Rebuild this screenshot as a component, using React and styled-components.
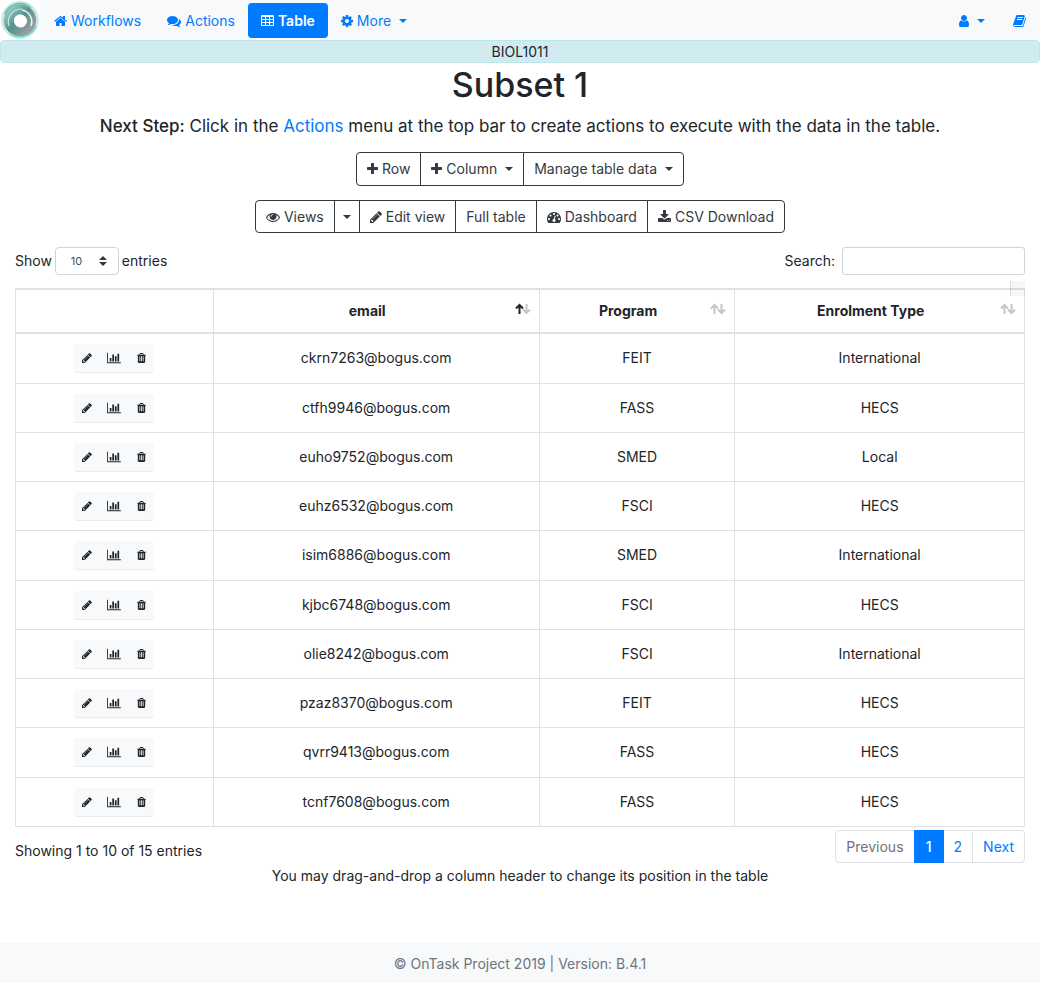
import React from 'react';
import styled, { createGlobalStyle, css } from 'styled-components';

const Global = createGlobalStyle`
  *, *::before, *::after { box-sizing: border-box; }
  body {
    margin: 0;
    background: #fff;
    color: #212529;
    font-family: Inter, "Liberation Sans", sans-serif;
    font-size: 14px;
    line-height: 22px;
  }
  button, input, select { font: inherit; color: inherit; }
  a { color: #007bff; text-decoration: none; }
`;

const cell = 'v-192q0-14-9-23t-23-9h-320q-14 0-23 9t-9 23v192q0 14 9 23t23 9h320q14 0 23-9t9-23z';
const slat = 'v-704q0-14-9-23t-23-9h-64q-14 0-23 9t-9 23v704q0 14 9 23t23 9h64q14 0 23-9t9-23z';
const dot = 'q0-53-37.5-90.5t-90.5-37.5-90.5 37.5-37.5 90.5 37.5 90.5 90.5 37.5 90.5-37.5 37.5-90.5z';

// Each icon: [left edge, width, path] on a 1792 unit em.
const ICONS = {
  home: [64, 1664, 'M1472 992v480q0 26-19 45t-45 19h-384v-384h-256v384h-384q-26 0-45-19t-19-45v-480q0-1 .5-3t.5-3l575-474 575 474q1 2 1 6zm223-69l-62 74q-8 9-21 11h-3q-13 0-21-7l-692-577-692 577q-12 8-24 7-13-2-21-11l-62-74q-8-10-7-23.5t11-21.5l719-599q32-26 76-26t76 26l244 204v-195q0-14 9-23t23-9h192q14 0 23 9t9 23v408l219 182q10 8 11 21.5t-7 23.5z'],
  comments: [0, 1792, 'M1408 768q0 139-94 257t-256.5 186.5-353.5 68.5q-86 0-176-16-124 88-278 128-36 9-86 16h-3q-11 0-20.5-8t-11.5-21q-1-3-1-6.5t.5-6.5 2-6l2.5-5 3.5-5.5 4-5 4.5-5 4-4.5q5-6 23-25t26-29.5 22.5-29 25-38.5 20.5-44q-124-72-195-177t-71-224q0-139 94-257t256.5-186.5 353.5-68.5 353.5 68.5 256.5 186.5 94 257zm384 256q0 120-71 224.5t-195 176.5q10 24 20.5 44t25 38.5 22.5 29 26 29.5 23 25q1 1 4 4.5t4.5 5 4 5 3.5 5.5l2.5 5 2 6 .5 6.5-1 6.5q-3 14-13 22t-22 7q-50-7-86-16-154-40-278-128-90 16-176 16-271 0-472-132 58 4 88 4 161 0 309-45t264-129q125-92 192-212t67-254q0-77-23-152 129 71 204 178t75 230z'],
  table: [64, 1664, `M576 1376${cell}M576 992${cell}M1088 1376${cell}M576 608${cell}M1088 992${cell}M1600 1376${cell}M1088 608${cell}M1600 992${cell}M1600 608${cell}M1728 288v1088q0 66-47 113t-113 47h-1344q-66 0-113-47t-47-113v-1088q0-66 47-113t113-47h1344q66 0 113 47t47 113z`],
  cog: [128, 1536, 'M1152 896q0-106-75-181t-181-75-181 75-75 181 75 181 181 75 181-75 75-181zm512-109v222q0 12-8 23t-20 13l-185 28q-19 54-39 91 35 50 107 138 10 12 10 25t-9 23q-27 37-99 108t-94 71q-12 0-26-9l-138-108q-44 23-91 38-16 136-29 186-7 28-36 28h-222q-14 0-24.5-8.5t-11.5-21.5l-28-184q-49-16-90-37l-141 107q-10 9-25 9-14 0-25-11-126-114-165-168-7-10-7-23 0-12 8-23 15-21 51-66.5t54-70.5q-27-50-41-99l-183-27q-13-2-21-12.5t-8-23.5v-222q0-12 8-23t19-13l186-28q14-46 39-92-40-57-107-138-10-12-10-24 0-10 9-23 26-36 98.5-107.5t94.5-71.5q13 0 26 10l138 107q44-23 91-38 16-136 29-186 7-28 36-28h222q14 0 24.5 8.5t11.5 21.5l28 184q49 16 90 37l142-107q9-9 24-9 13 0 25 10 129 119 165 170 7 8 7 22 0 12-8 23-15 21-51 66.5t-54 70.5q26 50 41 98l183 28q13 2 21 12.5t8 23.5z'],
  user: [256, 1280, 'M1536 1399q0 109-62.5 187t-150.5 78h-854q-88 0-150.5-78t-62.5-187q0-85 8.5-160.5t31.5-152 58.5-131 94-89 134.5-34.5q131 128 313 128t313-128q76 0 134.5 34.5t94 89 58.5 131 31.5 152 8.5 160.5zm-256-887q0 159-112.5 271.5t-271.5 112.5-271.5-112.5-112.5-271.5 112.5-271.5 271.5-112.5 271.5 112.5 112.5 271.5z'],
  book: [64, 1664, 'M1703 478q40 57 18 129l-275 906q-19 64-76.5 107.5t-122.5 43.5h-923q-77 0-148.5-53.5t-99.5-131.5q-24-67-2-127 0-4 3-27t4-37q1-8-3-21.5t-3-19.5q2-11 8-21t16.5-23.5 16.5-23.5q23-38 45-91.5t30-91.5q3-10 .5-30t-.5-28q3-11 17-28t17-23q21-36 42-92t25-90q1-9-2.5-32t.5-28q4-13 22-30.5t22-22.5q19-26 42.5-84.5t27.5-96.5q1-8-3-25.5t-2-26.5q2-8 9-18t18-23 17-21q8-12 16.5-30.5t15-35 16-36 19.5-32 26.5-23.5 36-11.5 47.5 5.5l-1 3q38-9 51-9h761q74 0 114 56t18 130l-274 906q-36 119-71.5 153.5t-128.5 34.5h-869q-27 0-38 15-11 16-1 43 24 70 144 70h923q29 0 56-15.5t35-41.5l300-987q7-22 5-57 38 15 59 43zm-1064 2q-4 13 2 22.5t20 9.5h608q13 0 25.5-9.5t16.5-22.5l21-64q4-13-2-22.5t-20-9.5h-608q-13 0-25.5 9.5t-16.5 22.5zm-83 256q-4 13 2 22.5t20 9.5h608q13 0 25.5-9.5t16.5-22.5l21-64q4-13-2-22.5t-20-9.5h-608q-13 0-25.5 9.5t-16.5 22.5z'],
  plus: [192, 1408, 'M1600 736v192q0 40-28 68t-68 28h-416v416q0 40-28 68t-68 28h-192q-40 0-68-28t-28-68v-416h-416q-40 0-68-28t-28-68v-192q0-40 28-68t68-28h416v-416q0-40 28-68t68-28h192q40 0 68 28t28 68v416h416q40 0 68 28t28 68z'],
  eye: [0, 1792, 'M1664 960q-152-236-381-353 61 104 61 225 0 185-131.5 316.5t-316.5 131.5-316.5-131.5-131.5-316.5q0-121 61-225-229 117-381 353 133 205 333.5 326.5t434.5 121.5 434.5-121.5 333.5-326.5zm-720-384q0-20-14-34t-34-14q-125 0-214.5 89.5t-89.5 214.5q0 20 14 34t34 14 34-14 14-34q0-86 61-147t147-61q20 0 34-14t14-34zm848 384q0 34-20 69-140 230-376.5 368.5t-499.5 138.5-499.5-139-376.5-368q-20-35-20-69t20-69q140-229 376.5-368t499.5-139 499.5 139 376.5 368q20 35 20 69z'],
  pencil: [128, 1536, 'M491 1536l91-91-235-235-91 91v107h128v128h107zm523-928q0-22-22-22-10 0-17 7l-542 542q-7 7-7 17 0 22 22 22 10 0 17-7l542-542q7-7 7-17zm-54-192l416 416-832 832h-416v-416zm683 96q0 53-37 90l-166 166-416-416 166-165q36-38 90-38 53 0 91 38l235 234q37 39 37 91z'],
  dashboard: [0, 1792, `M384 1152${dot}M576 704${dot}M1004 1185l101-382q6-26-7.5-48.5t-38.5-29.5-48 6.5-30 39.5l-101 382q-60 5-107 43.5t-63 98.5q-20 77 20 146t117 89 146-20 89-117q16-60-6-117t-72-91zM1664 1152${dot}M1024 512${dot}M1472 704${dot}M1792 1152q0 261-141 483-19 29-54 29h-1402q-35 0-54-29-141-221-141-483 0-182 71-348t191-286 286-191 348-71 348 71 286 191 191 286 71 348z`],
  download: [64, 1664, 'M1344 1344q0-26-19-45t-45-19-45 19-19 45 19 45 45 19 45-19 19-45zm256 0q0-26-19-45t-45-19-45 19-19 45 19 45 45 19 45-19 19-45zm128-224v320q0 40-28 68t-68 28h-1472q-40 0-68-28t-28-68v-320q0-40 28-68t68-28h465l135 136q58 56 136 56t136-56l136-136h464q40 0 68 28t28 68zm-325-569q17 41-14 70l-448 448q-18 19-45 19t-45-19l-448-448q-31-29-14-70 17-39 59-39h256v-448q0-26 19-45t45-19h256q26 0 45 19t19 45v448h256q42 0 59 39z'],
  chart: [0, 2048, 'M640 896v512h-256v-512h256zm384-512v1024h-256v-1024h256zm1024 1152v128h-2048v-1536h128v1408h1920zm-640-896v768h-256v-768h256zm384-384v1152h-256v-1152h256z'],
  trash: [192, 1408, `M704 1376${slat}M960 1376${slat}M1216 1376${slat}M672 384h448l-48-117q-7-9-17-11h-317q-10 2-17 11zM1600 416v64q0 14-9 23t-23 9h-96v948q0 83-47 143.5t-113 60.5h-832q-66 0-113-58.5t-47-141.5v-952h-96q-14 0-23-9t-9-23v-64q0-14 9-23t23-9h309l70-167q15-37 54-63t79-26h320q40 0 79 26t54 63l70 167h309q14 0 23 9t9 23z`],
};

const Svg = styled.svg`
  flex: none;
  display: block;
  fill: currentColor;
`;

function Icon({ name, size = 14 }) {
  const [x, w, d] = ICONS[name];
  return (
    <Svg width={Math.round((w / 1792) * size)} height={size} viewBox={`${x} 0 ${w} 1792`} aria-hidden="true">
      <path d={d} fillRule="evenodd" />
    </Svg>
  );
}

const Caret = styled.span`
  flex: none;
  border: 4px solid transparent;
  border-top-color: currentColor;
  border-bottom: 0;
  margin-left: ${p => (p.$alone ? 0 : 4)}px;
`;

const Page = styled.div`
  min-height: 100vh;
  display: flex;
  flex-direction: column;
`;

const NavBar = styled.nav`
  display: flex;
  align-items: center;
  height: 40px;
  background: #f8f9fa;
`;

const Brand = styled.a`
  width: 40px;
  height: 40px;
  margin-right: 1px;
  background: #fff;
`;

const NavLink = styled.a`
  display: flex;
  align-items: center;
  gap: 4px;
  height: 35px;
  padding: 1px 13px 0;
  border-radius: 4px;
  ${p => p.$active && css`
    background: #007bff;
    color: #fff;
    font-weight: 600;
  `}
`;

const NavEnd = styled.div`
  display: flex;
  gap: 2px;
  margin-left: auto;
  margin-right: 1px;
`;

const WorkflowName = styled.div`
  height: 23px;
  line-height: 22px;
  border: 1px solid #bee5eb;
  border-radius: 4px;
  background: #d1ecf1;
  text-align: center;
`;

const Main = styled.main`
  padding: 0 15px;
  text-align: center;
`;

const Title = styled.h1`
  margin: 0 0 7px;
  font-size: 34px;
  line-height: 44px;
  font-weight: 500;
`;

const Lead = styled.p`
  margin: 0 0 14px;
  font-size: 17px;
  line-height: 24px;
`;

const LeadLabel = styled.strong`
  font-weight: 500;
`;

const Toolbar = styled.div`
  display: flex;
  justify-content: center;
  margin-bottom: 14px;
`;

const ToolButton = styled.button`
  display: flex;
  align-items: center;
  gap: 4px;
  height: ${p => (p.$tall ? 34 : 33)}px;
  padding: 0 ${p => (p.$split ? 8 : 10)}px;
  border: 1px solid #343a40;
  background: #fff;
  color: #343a40;
  & + & { margin-left: -1px; }
  &:first-child { border-radius: 4px 0 0 4px; }
  &:last-child { border-radius: 0 4px 4px 0; }
`;

const Controls = styled.div`
  display: flex;
  justify-content: space-between;
  margin-bottom: 14px;
`;

const Field = styled.label`
  display: flex;
  align-items: center;
  gap: ${p => p.$gap}px;
  height: 27px;
`;

const SelectBox = styled.span`
  position: relative;
  display: block;
  color: #495057;
`;

const Select = styled.select`
  appearance: none;
  display: block;
  width: 64px;
  height: 28px;
  padding: 0 15px;
  border: 1px solid #ced4da;
  border-radius: 4px;
  background: #fff;
  font-size: 11px;
`;

const SelectArrows = styled.svg`
  position: absolute;
  right: 12px;
  top: 9px;
  pointer-events: none;
  fill: #343a40;
`;

const SearchInput = styled.input`
  width: 183px;
  height: 28px;
  padding: 4px 8px;
  border: 1px solid #ced4da;
  border-radius: 3px;
  background: #fff;
`;

const TableWrap = styled.div`
  position: relative;
`;

const CornerHandle = styled.span`
  position: absolute;
  top: -7px;
  right: 0;
  width: 15px;
  height: 15px;
  border-left: 1px solid rgba(0, 0, 0, 0.1);
  background: rgba(0, 0, 0, 0.03);
`;

const DataTable = styled.table`
  width: 100%;
  height: 539px;
  border-collapse: collapse;
  table-layout: fixed;
  border: 1px solid #dee2e6;
`;

const Th = styled.th`
  width: ${p => p.$width};
  height: 44px;
  padding: 0 8px;
  border: 1px solid #dee2e6;
  border-top-width: 2px;
  border-bottom-width: 2px;
  font-weight: 700;
`;

const HeadInner = styled.div`
  position: relative;
  padding-right: 18px;
`;

const SortMark = styled.svg`
  position: absolute;
  right: 0;
  top: 3px;
  fill: none;
  stroke-width: 2;
`;

const Td = styled.td`
  padding: 0 8px;
  border: 1px solid #dee2e6;
`;

const RowActions = styled.div`
  display: flex;
  justify-content: center;
`;

const RowButton = styled.button`
  display: flex;
  align-items: center;
  justify-content: center;
  width: ${p => (p.$wide ? 28 : 26)}px;
  height: 28px;
  padding: 0;
  border: 0;
  background: #f8f9fa;
  color: #212529;
  box-shadow: 0 1px 0 #e9ebed;
  &:first-child { border-radius: 3px 0 0 3px; }
  &:last-child { border-radius: 0 3px 3px 0; }
`;

const TableFoot = styled.div`
  display: flex;
  justify-content: space-between;
  align-items: flex-start;
  padding-top: 3px;
`;

const Info = styled.div`
  padding-top: 10px;
`;

const Pager = styled.nav`
  display: flex;
`;

const PageLink = styled.a`
  display: block;
  min-width: 30px;
  height: 33px;
  line-height: 31px;
  padding: 0 10px;
  border: 1px solid #dee2e6;
  & + & { margin-left: -1px; }
  &:first-child { border-radius: 4px 0 0 4px; }
  &:last-child { border-radius: 0 4px 4px 0; }
  ${p => p.$disabled && css`color: #6c757d;`}
  ${p => p.$current && css`
    background: #007bff;
    border-color: #007bff;
    color: #fff;
    font-weight: 500;
    position: relative;
  `}
`;

const Hint = styled.p`
  margin: 2px 0 20px;
`;

const Footer = styled.footer`
  margin-top: auto;
  height: 40px;
  line-height: 42px;
  background: #f8f9fa;
  color: #6c757d;
  text-align: center;
`;

function Logo() {
  return (
    <svg width="40" height="40" viewBox="0 0 40 40" fill="none" aria-hidden="true">
      <defs>
        <linearGradient id="ring" x1="0" y1="0" x2="1" y2="1">
          <stop offset="0" stopColor="#8fc9c0" />
          <stop offset="0.45" stopColor="#55938f" />
          <stop offset="1" stopColor="#a59da5" />
        </linearGradient>
      </defs>
      <circle cx="20" cy="20" r="18" stroke="#b9ebe1" strokeWidth="1.5" />
      <circle cx="20" cy="20" r="16" stroke="#c9d6d5" strokeWidth="2" />
      <circle cx="20" cy="20.5" r="11" stroke="url(#ring)" strokeWidth="10" />
      <path d="M5 14A16 16 0 0 1 31 8" stroke="#67b9ac" strokeWidth="1.5" />
      <path d="M11 34A17 17 0 0 0 36 26" stroke="#73d9c5" strokeWidth="1.5" />
      <path d="M9 26A13 13 0 0 1 22 9" stroke="#c7e5e1" strokeWidth="1.2" />
      <path d="M22 10A12 12 0 0 1 31 26" stroke="#e2f4f1" strokeWidth="1.6" />
      <circle cx="20.5" cy="21" r="6.5" fill="#fff" />
    </svg>
  );
}

function Sort({ active }) {
  return (
    <SortMark width="16" height="12" viewBox="0 0 16 12" aria-hidden="true">
      <path d="M11.5 1v9M8 6.5l3.5 3.5 3.5-3.5" stroke="#c4c6c8" />
      <path d="M4.500 11V2M1 5.500L4.500 2 8 5.500" stroke={active ? '#212529' : '#c4c6c8'} />
    </SortMark>
  );
}

const COLUMNS = [
  { label: 'email', width: '32.3%', sorted: true },
  { label: 'Program', width: '19.4%' },
  { label: 'Enrolment Type', width: '28.7%' },
];

const ROWS = [
  ['ckrn7263@bogus.com', 'FEIT', 'International'],
  ['ctfh9946@bogus.com', 'FASS', 'HECS'],
  ['euho9752@bogus.com', 'SMED', 'Local'],
  ['euhz6532@bogus.com', 'FSCI', 'HECS'],
  ['isim6886@bogus.com', 'SMED', 'International'],
  ['kjbc6748@bogus.com', 'FSCI', 'HECS'],
  ['olie8242@bogus.com', 'FSCI', 'International'],
  ['pzaz8370@bogus.com', 'FEIT', 'HECS'],
  ['qvrr9413@bogus.com', 'FASS', 'HECS'],
  ['tcnf7608@bogus.com', 'FASS', 'HECS'],
];

export default function App() {
  return (
    <Page>
      <Global />
      <NavBar>
        <Brand href="#" aria-label="OnTask"><Logo /></Brand>
        <NavLink href="#"><Icon name="home" />Workflows</NavLink>
        <NavLink href="#"><Icon name="comments" />Actions</NavLink>
        <NavLink href="#" $active><Icon name="table" />Table</NavLink>
        <NavLink href="#"><Icon name="cog" />More<Caret /></NavLink>
        <NavEnd>
          <NavLink href="#" aria-label="Account"><Icon name="user" /><Caret /></NavLink>
          <NavLink href="#" aria-label="Documentation"><Icon name="book" /></NavLink>
        </NavEnd>
      </NavBar>
      <WorkflowName>BIOL1011</WorkflowName>
      <Main>
        <Title>Subset 1</Title>
        <Lead>
          <LeadLabel>Next Step:</LeadLabel> Click in the <a href="#">Actions</a> menu at the top bar to create actions to execute with the data in the table.
        </Lead>
        <Toolbar>
          <ToolButton $tall><Icon name="plus" />Row</ToolButton>
          <ToolButton $tall><Icon name="plus" />Column<Caret /></ToolButton>
          <ToolButton $tall>Manage table data<Caret /></ToolButton>
        </Toolbar>
        <Toolbar>
          <ToolButton><Icon name="eye" />Views</ToolButton>
          <ToolButton $split aria-label="More views"><Caret $alone /></ToolButton>
          <ToolButton><Icon name="pencil" />Edit view</ToolButton>
          <ToolButton>Full table</ToolButton>
          <ToolButton><Icon name="dashboard" />Dashboard</ToolButton>
          <ToolButton><Icon name="download" />CSV Download</ToolButton>
        </Toolbar>
        <Controls>
          <Field $gap={3}>
            Show
            <SelectBox>
              <Select defaultValue="10">
                <option>10</option>
                <option>25</option>
                <option>50</option>
              </Select>
              <SelectArrows width="8" height="10" viewBox="0 0 8 10" aria-hidden="true">
                <path d="M4 0l4 4H0zM4 10l4-4H0z" />
              </SelectArrows>
            </SelectBox>
            entries
          </Field>
          <Field $gap={7}>
            Search:
            <SearchInput type="search" />
          </Field>
        </Controls>
        <TableWrap>
          <DataTable>
            <thead>
              <tr>
                <Th $width="19.6%" aria-label="Operations" />
                {COLUMNS.map(c => (
                  <Th key={c.label} $width={c.width}>
                    <HeadInner>{c.label}<Sort active={c.sorted} /></HeadInner>
                  </Th>
                ))}
              </tr>
            </thead>
            <tbody>
              {ROWS.map(row => (
                <tr key={row[0]}>
                  <Td>
                    <RowActions>
                      <RowButton aria-label="Edit row"><Icon name="pencil" size={12} /></RowButton>
                      <RowButton $wide aria-label="Row statistics"><Icon name="chart" size={12} /></RowButton>
                      <RowButton aria-label="Delete row"><Icon name="trash" size={12} /></RowButton>
                    </RowActions>
                  </Td>
                  {row.map((value, i) => <Td key={i}>{value}</Td>)}
                </tr>
              ))}
            </tbody>
          </DataTable>
          <CornerHandle />
        </TableWrap>
        <TableFoot>
          <Info>Showing 1 to 10 of 15 entries</Info>
          <Pager aria-label="Table pages">
            <PageLink href="#" $disabled>Previous</PageLink>
            <PageLink href="#" $current>1</PageLink>
            <PageLink href="#">2</PageLink>
            <PageLink href="#">Next</PageLink>
          </Pager>
        </TableFoot>
        <Hint>You may drag-and-drop a column header to change its position in the table</Hint>
      </Main>
      <Footer>© OnTask Project 2019 | Version: B.4.1</Footer>
    </Page>
  );
}
